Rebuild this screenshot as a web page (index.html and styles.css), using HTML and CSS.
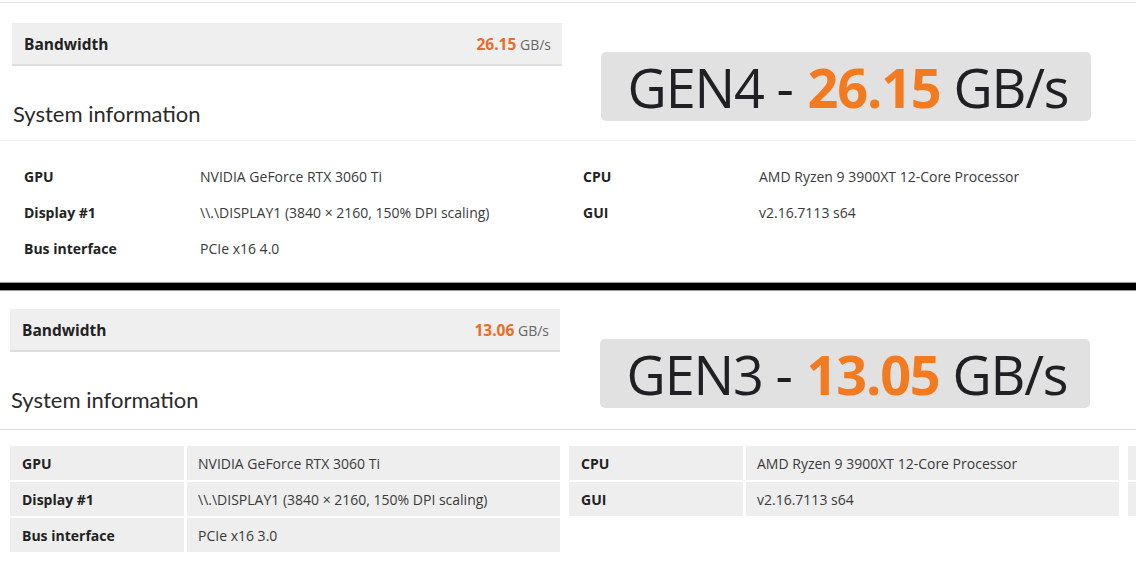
FILE: index.html
```html
<!DOCTYPE html>
<html lang="en">
<head>
<meta charset="utf-8">
<title>PCIe bandwidth comparison</title>
<link rel="stylesheet" href="styles.css">
</head>
<body>
<section class="panel panel--top">
  <div class="head">
    <div class="head-left">
      <div class="bw">
        <span class="bw-label">Bandwidth</span>
        <span class="bw-value"><b>26.15</b> GB/s</span>
      </div>
      <h2 class="title">System information</h2>
    </div>
    <div class="gen-box">GEN4 - <b>26.15</b> GB/s</div>
  </div>
  <div class="info">
    <div class="grp">
      <div class="cell lab">GPU</div><div class="cell val">NVIDIA GeForce RTX 3060 Ti</div>
      <div class="cell lab">Display #1</div><div class="cell val">\\.\DISPLAY1 (3840 × 2160, 150% DPI scaling)</div>
      <div class="cell lab">Bus interface</div><div class="cell val">PCIe x16 4.0</div>
    </div>
    <div class="grp">
      <div class="cell lab">CPU</div><div class="cell val">AMD Ryzen 9 3900XT 12-Core Processor</div>
      <div class="cell lab">GUI</div><div class="cell val">v2.16.7113 s64</div>
    </div>
    <div class="grp grp--stub">
      <div class="cell lab"></div>
      <div class="cell lab"></div>
    </div>
  </div>
</section>
<div class="divider"></div>
<section class="panel panel--bottom">
  <div class="head">
    <div class="head-left">
      <div class="bw">
        <span class="bw-label">Bandwidth</span>
        <span class="bw-value"><b>13.06</b> GB/s</span>
      </div>
      <h2 class="title">System information</h2>
    </div>
    <div class="gen-box">GEN3 - <b>13.05</b> GB/s</div>
  </div>
  <div class="info">
    <div class="grp">
      <div class="cell lab">GPU</div><div class="cell val">NVIDIA GeForce RTX 3060 Ti</div>
      <div class="cell lab">Display #1</div><div class="cell val">\\.\DISPLAY1 (3840 × 2160, 150% DPI scaling)</div>
      <div class="cell lab">Bus interface</div><div class="cell val">PCIe x16 3.0</div>
    </div>
    <div class="grp">
      <div class="cell lab">CPU</div><div class="cell val">AMD Ryzen 9 3900XT 12-Core Processor</div>
      <div class="cell lab">GUI</div><div class="cell val">v2.16.7113 s64</div>
    </div>
    <div class="grp grp--stub">
      <div class="cell lab"></div>
      <div class="cell lab"></div>
    </div>
  </div>
</section>
</body>
</html>
```

FILE: styles.css
```css
* { box-sizing: border-box; }
html, body {
  margin: 0;
  padding: 0;
  background: #fff;
  overflow: hidden;
}
body {
  width: 1136px;
  height: 568px;
  font-family: "Open Sans", "Noto Sans", sans-serif;
  color: #222;
}

.panel {
  height: 282px;
  overflow: hidden;
}
.panel--top {
  margin-top: 2px;
  height: 280px;
  border-top: 1px solid #e6e6e6;
  padding-left: 12px;
}
.panel--bottom {
  height: 277px;
  padding-left: 10px;
}

.head {
  display: flex;
  align-items: flex-start;
  padding-top: 20px;
  padding-bottom: 12px;
  border-bottom: 1px solid #f1f1f1;
  margin-left: -12px;
  padding-left: 12px;
}
.panel--bottom .head {
  padding-top: 18px;
  padding-bottom: 15px;
  border-bottom-color: #dcdcdc;
  margin-left: -10px;
  padding-left: 10px;
}

.head-left {
  width: 550px;
  flex: none;
}

.bw {
  height: 43px;
  background: #efefef;
  border-bottom: 2px solid #dedede;
  display: flex;
  align-items: center;
  justify-content: space-between;
  padding: 0 11px 0 12px;
}
.bw-label {
  font-size: 15.5px;
  font-weight: 700;
  color: #222;
}
.bw-value {
  font-size: 14px;
  color: #666;
}
.bw-value b {
  font-size: 15.5px;
  font-weight: 700;
  color: #ec6b26;
}

.title {
  margin: 34px 0 0 1px;
  font-family: "Lato", "Open Sans", sans-serif;
  font-weight: 400;
  font-size: 22px;
  line-height: 28px;
  color: #2a2a2a;
}

.gen-box {
  margin-top: 29px;
  margin-left: 39px;
  width: 490px;
  height: 69px;
  background: #e1e1e1;
  border-radius: 5px;
  display: flex;
  align-items: center;
  justify-content: center;
  white-space: nowrap;
  font-size: 54px;
  font-weight: 400;
  color: #1f1f24;
  letter-spacing: -1.2px;
  padding-left: 4px;
}
.panel--bottom .gen-box {
  margin-left: 40px;
  margin-top: 30px;
}
.gen-box b {
  font-weight: 700;
  color: #f47a20;
  margin: 0 13px 0 15px;
}

.info {
  display: flex;
  gap: 9px;
  padding-top: 18px;
}
.panel--bottom .info {
  padding-top: 16px;
}
.grp {
  display: grid;
  grid-template-columns: 174px 373px;
  grid-auto-rows: 34px;
  column-gap: 3px;
  row-gap: 2px;
  flex: none;
  align-content: start;
}
.grp--stub {
  grid-template-columns: 174px;
}
.cell {
  display: flex;
  align-items: center;
  font-size: 14px;
  white-space: nowrap;
}
.panel--bottom .cell {
  background: #eeeeee;
}
.lab {
  padding-left: 12px;
  font-weight: 700;
  color: #222;
}
.val {
  padding-left: 11px;
  color: #3a3a3a;
}

.divider {
  height: 9px;
  background: #000;
  border-top: 1px solid #9a9a9a;
  border-bottom: 1px solid #9a9a9a;
}
```
